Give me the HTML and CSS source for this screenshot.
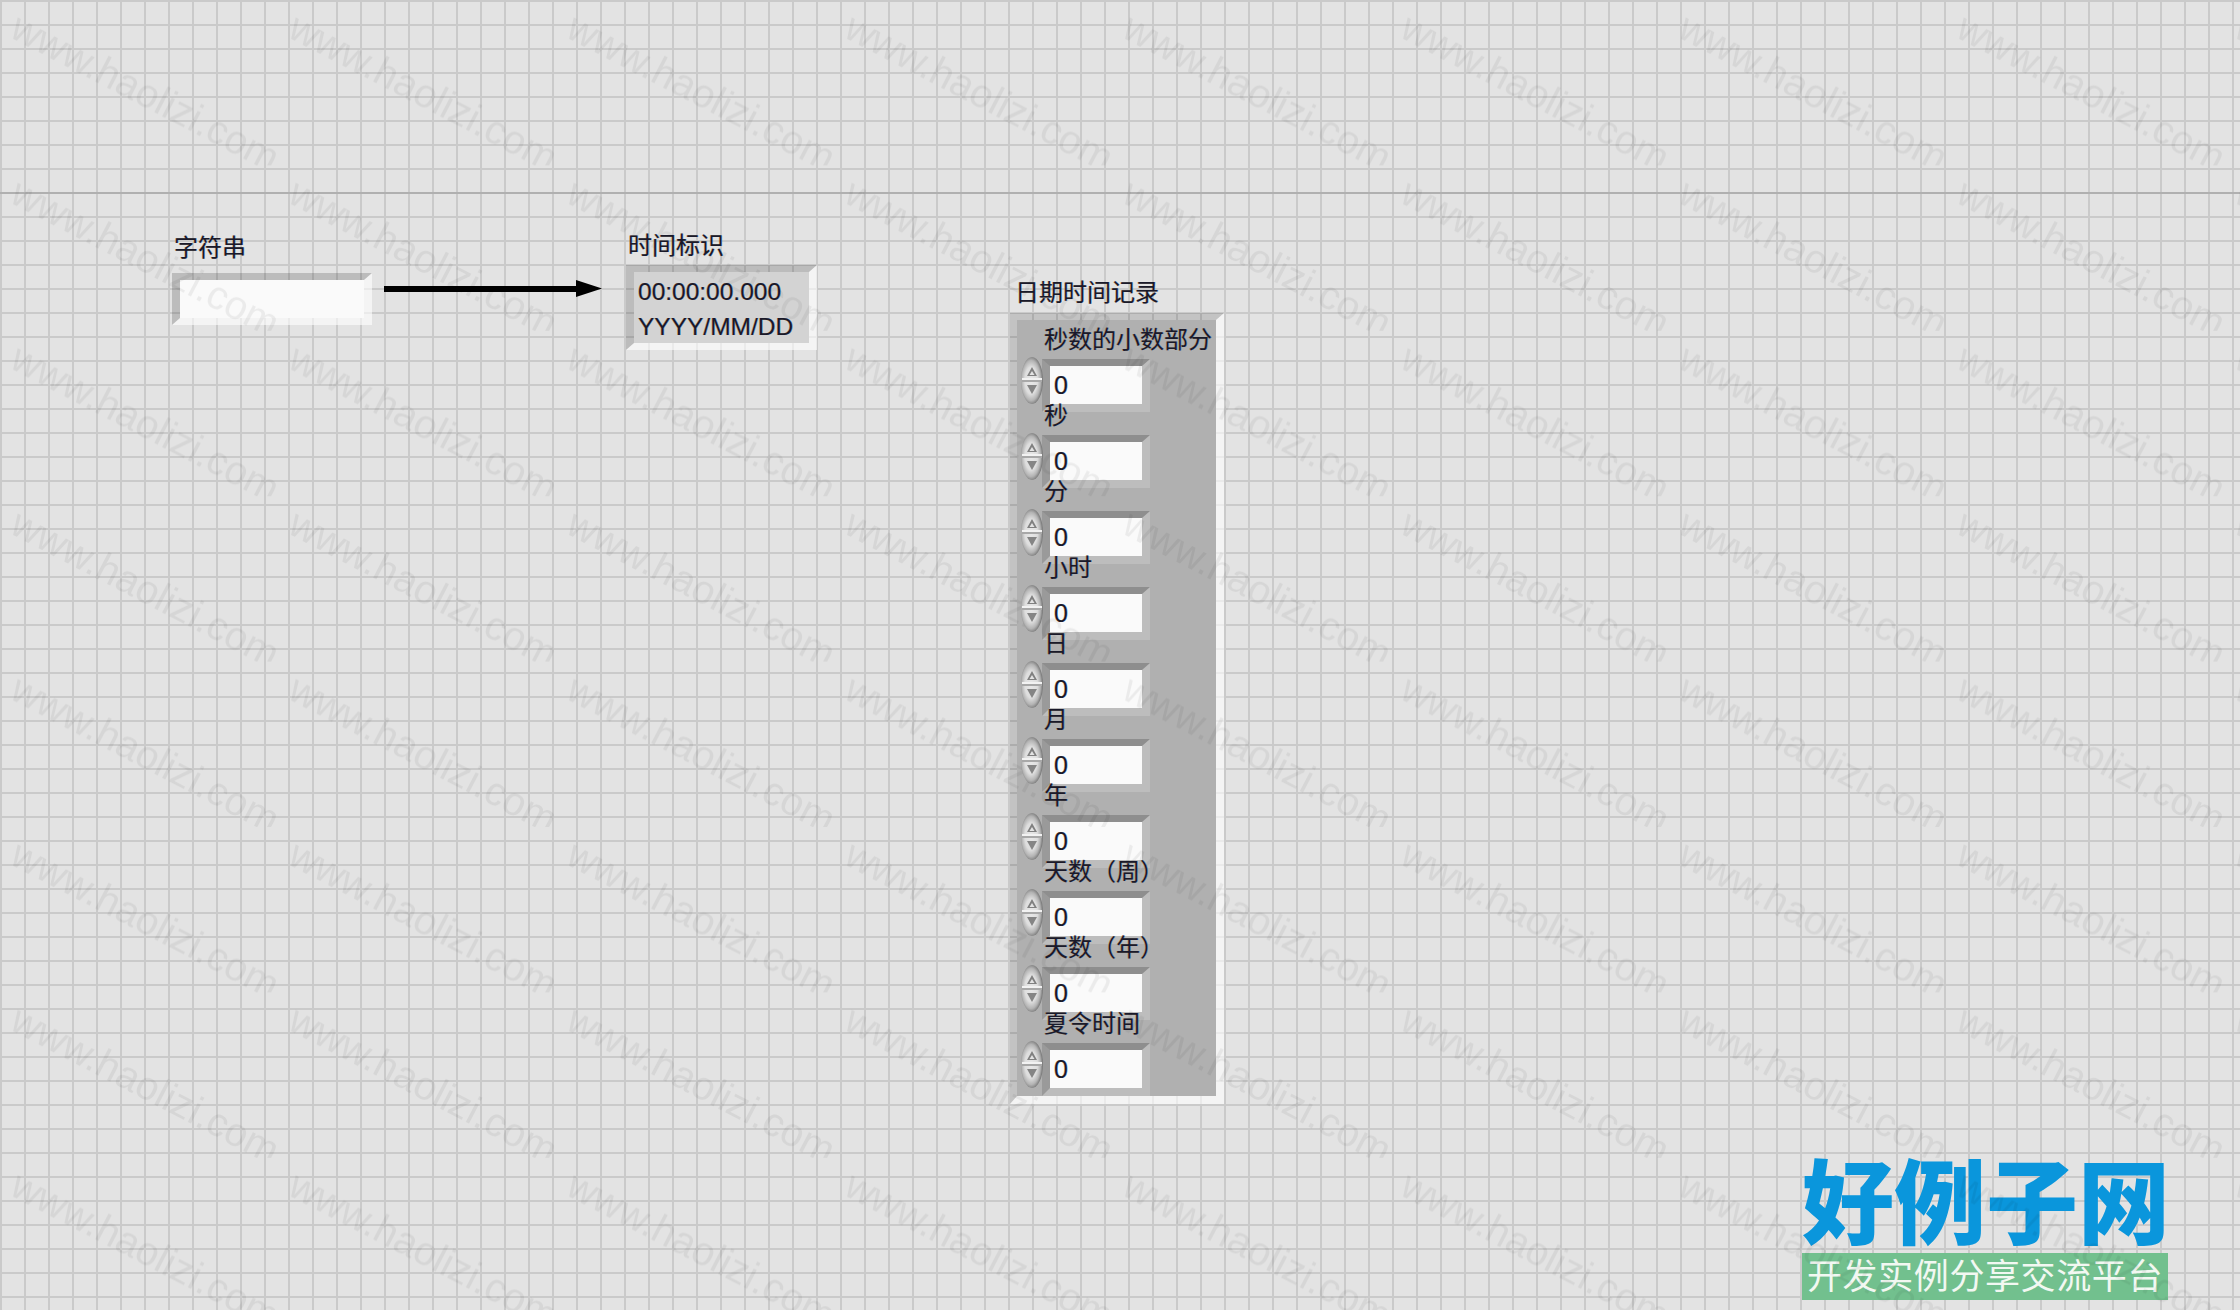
FILE: index.html
```html
<!DOCTYPE html>
<html>
<head>
<meta charset="utf-8"/>
<link rel="stylesheet" href="styles.css">
<title>前面板</title>
</head>
<body>

<svg class="defs" width="0" height="0">
<defs>
<radialGradient id="spinfill" cx=".46" cy=".5" r=".52">
<stop offset="0" stop-color="#e8e8e8"/>
<stop offset=".55" stop-color="#dedede"/>
<stop offset=".82" stop-color="#b4b4b4"/>
<stop offset="1" stop-color="#7c7c7c"/>
</radialGradient>
<symbol id="spin" viewBox="0 0 22 47">
<ellipse cx="11" cy="23.5" rx="11" ry="23.5" fill="url(#spinfill)"/>
<rect x="1" y="21" width="20" height="2" fill="#f2f2f2"/>
<rect x="1" y="23" width="20" height="2" fill="#a8a8a8"/>
<path d="M11 10 L6 19 H16 Z M11 14 L8.500 18 H13.500 Z" fill="#808080" fill-rule="evenodd"/>
<path d="M6 28 H16 L11 37 Z" fill="#858585"/>
</symbol>
<pattern id="wm" x="6" width="278" height="165.400" patternUnits="userSpaceOnUse">
<text class="wmtext" x="2" y="36" transform="rotate(27.5 2 36)">www.haolizi.com</text>
</pattern>
</defs>
</svg>

<div class="panel">

<div class="topline"></div>

<div class="ctl strctl">
<div class="lbl">字符串</div>
<div class="bevel strbox"><div class="well"></div></div>
</div>

<svg class="wire" width="220" height="20" viewBox="0 0 220 20">
<rect x="0" y="7" width="196" height="6" fill="#000"/>
<path d="M192 1 L218 9.5 L192 18 Z" fill="#000"/>
</svg>

<div class="ctl tsctl">
<div class="lbl">时间标识</div>
<div class="bevel tsbox">
<div class="tswell">00:00:00.000<br>YYYY/MM/DD</div>
</div>
</div>

<div class="ctl dtctl">
<div class="lbl">日期时间记录</div>
<div class="cluster">
<div class="item"><div class="lbl ilbl">秒数的小数部分</div><div class="numrow"><svg class="spin"><use href="#spin"/></svg><div class="numbox"><div class="numval">0</div></div></div></div>
<div class="item"><div class="lbl ilbl">秒</div><div class="numrow"><svg class="spin"><use href="#spin"/></svg><div class="numbox"><div class="numval">0</div></div></div></div>
<div class="item"><div class="lbl ilbl">分</div><div class="numrow"><svg class="spin"><use href="#spin"/></svg><div class="numbox"><div class="numval">0</div></div></div></div>
<div class="item"><div class="lbl ilbl">小时</div><div class="numrow"><svg class="spin"><use href="#spin"/></svg><div class="numbox"><div class="numval">0</div></div></div></div>
<div class="item"><div class="lbl ilbl">日</div><div class="numrow"><svg class="spin"><use href="#spin"/></svg><div class="numbox"><div class="numval">0</div></div></div></div>
<div class="item"><div class="lbl ilbl">月</div><div class="numrow"><svg class="spin"><use href="#spin"/></svg><div class="numbox"><div class="numval">0</div></div></div></div>
<div class="item"><div class="lbl ilbl">年</div><div class="numrow"><svg class="spin"><use href="#spin"/></svg><div class="numbox"><div class="numval">0</div></div></div></div>
<div class="item"><div class="lbl ilbl">天数（周）</div><div class="numrow"><svg class="spin"><use href="#spin"/></svg><div class="numbox"><div class="numval">0</div></div></div></div>
<div class="item"><div class="lbl ilbl">天数（年）</div><div class="numrow"><svg class="spin"><use href="#spin"/></svg><div class="numbox"><div class="numval">0</div></div></div></div>
<div class="item"><div class="lbl ilbl">夏令时间</div><div class="numrow"><svg class="spin"><use href="#spin"/></svg><div class="numbox"><div class="numval">0</div></div></div></div>
</div>
</div>

<div class="logo">
<div class="logoname">好例子网</div>
<div class="logosub">开发实例分享交流平台</div>
</div>

<svg class="wmlayer" width="2240" height="1310">
<rect width="2240" height="1310" fill="url(#wm)"/>
</svg>

</div>

</body>
</html>
```

FILE: styles.css
```css
html,body{margin:0;padding:0;}
body{font-family:"Liberation Sans","Noto Sans CJK SC",sans-serif;font-size:24px;color:#1a1a2a;}
.defs{position:absolute;}

/** panel **/
.panel{position:relative;width:2240px;height:1310px;overflow:hidden;
background-color:#e3e3e3;
background-image:
repeating-linear-gradient(90deg,#cacaca 0,#cacaca 2px,transparent 2px,transparent 24px),
repeating-linear-gradient(180deg,#cacaca 0,#cacaca 2px,transparent 2px,transparent 24px);
}
.topline{position:absolute;left:0;right:0;top:192px;height:2px;background:#b0b0b0;}

.lbl{line-height:28px;white-space:nowrap;text-shadow:-.5px 0 rgba(210,120,10,.45),.5px 0 rgba(0,110,220,.45);}

/** controls on the panel **/
.ctl{position:absolute;}
.strctl{left:174px;top:234px;}
.tsctl{left:628px;top:232px;}
.dtctl{left:1015px;top:279px;}
.strctl .bevel{margin:11px 0 0 -2px;}
.tsctl .bevel{margin:5px 0 0 -2px;}

.bevel{box-sizing:border-box;
border-style:solid;border-width:7px 8px 7px 8px;
border-color:rgba(0,0,0,.17) rgba(255,255,255,.62) rgba(255,255,255,.62) rgba(0,0,0,.17);
}
.strbox{width:200px;height:52px;}
.well{height:100%;background:#fafafa;}
.tsbox{width:191px;height:85px;}
.tswell{height:100%;box-sizing:border-box;padding:2px 0 0 4px;background:#d3d3d3;font-size:24.5px;line-height:35px;white-space:nowrap;
text-shadow:-.5px 0 rgba(210,120,10,.45),.5px 0 rgba(0,110,220,.45);}

.wire{position:absolute;left:384px;top:279px;}

/** cluster **/
.cluster{box-sizing:border-box;width:214px;height:791px;margin:6px 0 0 -5px;
padding:6px 0 10px;
background:#b0b0b0;background-clip:padding-box;
border-style:solid;border-width:7px 8px 8px 7px;
border-color:rgba(0,0,0,.14) rgba(255,255,255,.62) rgba(255,255,255,.62) rgba(0,0,0,.14);
}
.item{height:76px;}
.ilbl{margin-left:27px;}
.numrow{display:flex;align-items:flex-start;margin:3px 0 0 4px;}
.spin{position:relative;z-index:1;width:22px;height:47px;margin-right:-1px;}
.numbox{box-sizing:border-box;width:108px;height:53px;margin-top:2px;
border-style:solid;border-width:7px 8px 8px 8px;
border-color:#8e8e8e #bdbdbd #bdbdbd #9a9a9a;}
.numval{height:100%;background:#fafafa;padding-left:4px;font-size:25px;line-height:38px;
text-shadow:-.5px 0 rgba(210,120,10,.45),.5px 0 rgba(0,110,220,.45);}

/** logo **/
.logo{position:absolute;left:1802px;top:1150px;width:366px;}
.logoname{height:103px;font-size:92px;line-height:110px;font-weight:900;color:#0a96dc;white-space:nowrap;}
.logosub{height:47px;background:#72c08e;color:#f2f8f2;font-size:35px;line-height:47px;text-align:center;white-space:nowrap;letter-spacing:.6px;}

/** watermark **/
.wmlayer{position:absolute;left:0;top:0;pointer-events:none;}
.wmtext{font-family:"Liberation Sans",sans-serif;font-size:40px;fill:rgba(0,0,0,.06);}
```
